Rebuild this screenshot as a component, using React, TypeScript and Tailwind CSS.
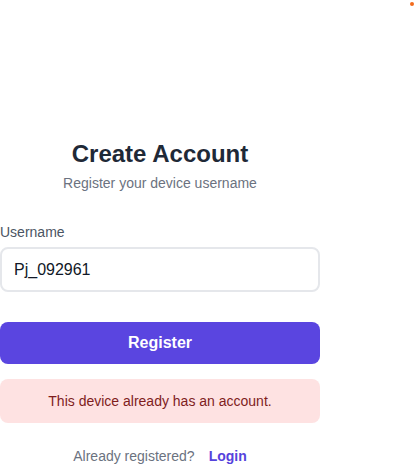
import { useState } from "react";

function App() {
    const [username, setUsername] = useState("Pj_092961");

    return (
        <div className="relative min-h-screen bg-white font-['Liberation_Sans',Arial,sans-serif]">
            <span className="absolute right-[2px] top-[2px] w-[4px] h-[4px] rounded-full bg-[#f26b1d]" />
            <div className="w-80 pt-[138px]">
                <h1 className="text-2xl font-bold text-center text-[#1f2937]">Create Account</h1>
                <p className="mt-[3px] text-sm text-center text-[#6b7280]">Register your device username</p>

                <label className="block mt-[29px] text-sm text-[#4b5563]">Username</label>
                <input
                    value={username}
                    onChange={(e) => setUsername(e.target.value)}
                    className="mt-[5px] w-full h-[45px] px-[12px] border-2 border-[#e5e7eb] rounded-lg text-base text-[#111827] outline-none"
                />

                <button className="mt-[30px] w-full h-[42px] rounded-lg bg-[#5a45e0] text-white font-bold text-base">
                    Register
                </button>

                <div className="mt-[15px] h-[44px] flex items-center justify-center rounded-lg bg-[#fee2e2] text-sm text-[#7f1d1d]">
                    This device already has an account.
                </div>

                <p className="mt-[23px] text-sm text-center text-[#6b7280]">
                    Already registered?
                    <a className="ml-[14px] font-bold text-[#5542dc] cursor-pointer">Login</a>
                </p>
            </div>
        </div>
    );
}

export default App;
